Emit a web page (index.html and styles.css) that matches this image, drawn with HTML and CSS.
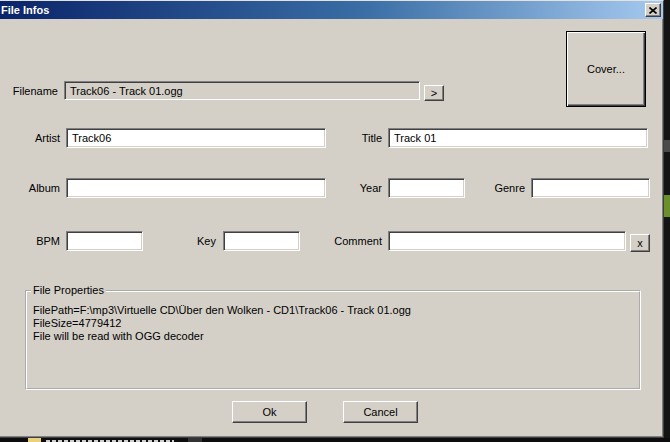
FILE: index.html
```html
<!DOCTYPE html>
<html lang="de">
<head>
<meta charset="utf-8">
<title>File Infos</title>
<link rel="stylesheet" href="styles.css">
</head>
<body>
<div class="screen">
  <div class="main">
    <div class="window">
      <div class="titlebar">
        <span class="title">File Infos</span>
        <button class="btn close" aria-label="Close">
          <svg width="8" height="7" viewBox="0 0 8 7"><path d="M0.5 0.5 L7.5 6.5 M7.5 0.5 L0.5 6.5" stroke="#000" stroke-width="1.6" fill="none"/></svg>
        </button>
      </div>
      <div class="content">
        <div class="top">
          <div class="row filename-row">
            <label class="lbl w-filename">Filename</label>
            <div class="field disabled w-filefield">Track06 - Track 01.ogg</div>
            <button class="btn small">&gt;</button>
          </div>
          <button class="btn default cover">Cover...</button>
        </div>

        <div class="row row2">
          <label class="lbl w60">Artist</label>
          <input class="field w260" type="text" value="Track06">
          <label class="lbl w56">Title</label>
          <input class="field w260" type="text" value="Track 01">
        </div>

        <div class="row row3">
          <label class="lbl w60">Album</label>
          <input class="field w260" type="text" value="">
          <label class="lbl w56">Year</label>
          <input class="field w77" type="text" value="">
          <label class="lbl w60">Genre</label>
          <input class="field w119" type="text" value="">
        </div>

        <div class="row row4">
          <label class="lbl w60">BPM</label>
          <input class="field w77" type="text" value="">
          <label class="lbl w73 key">Key</label>
          <input class="field w77" type="text" value="">
          <label class="lbl w82">Comment</label>
          <input class="field w238" type="text" value="">
          <button class="btn clear">x</button>
        </div>

        <fieldset class="group">
          <legend>File Properties</legend>
          <div class="props">
            <div>FilePath=F:\mp3\Virtuelle CD\Über den Wolken - CD1\Track06 - Track 01.ogg</div>
            <div>FileSize=4779412</div>
            <div>File will be read with OGG decoder</div>
          </div>
        </fieldset>

        <div class="actions">
          <button class="btn action">Ok</button>
          <button class="btn action">Cancel</button>
        </div>
      </div>
    </div>
    <div class="side">
      <div class="side-gray"></div>
      <div class="side-green"></div>
    </div>
  </div>
  <div class="bottom">
    <span class="folder"></span>
    <span class="bottom-tops"></span>
    <span class="bottom-block"></span>
  </div>
</div>
</body>
</html>
```

FILE: styles.css
```css
* { box-sizing: border-box; }

html, body {
  margin: 0;
  padding: 0;
}

body {
  width: 670px;
  height: 442px;
  overflow: hidden;
  background: #0d0d0d;
  font-family: "Liberation Sans", Arial, sans-serif;
  font-size: 11px;
  color: #000;
}

.screen {
  display: flex;
  flex-direction: column;
  width: 670px;
  height: 442px;
}

.main {
  display: flex;
  height: 438px;
}

.window {
  width: 664px;
  height: 438px;
  background: #d4d0c8;
  border-top: 1px solid #e4e2dc;
  border-right: 1px solid #404040;
  border-bottom: 1px solid #404040;
  box-shadow: inset -1px -1px #808080;
  display: flex;
  flex-direction: column;
}

.titlebar {
  height: 18px;
  display: flex;
  align-items: center;
  justify-content: space-between;
  padding: 0 2px 0 1px;
  background: linear-gradient(to right, #0a246a 0%, #3a6ea5 55%, #a6caf0 100%);
}

.title {
  color: #fff;
  font-weight: bold;
  font-size: 11px;
}

.btn {
  background: #d4d0c8;
  border: 1px solid;
  border-color: #fff #404040 #404040 #fff;
  box-shadow: inset -1px -1px #808080;
  font: inherit;
  color: #000;
  padding: 0;
  margin: 0;
  display: flex;
  align-items: center;
  justify-content: center;
}

.close {
  width: 16px;
  height: 14px;
}

.content {
  padding-top: 12px;
  display: flex;
  flex-direction: column;
}

.top {
  display: flex;
  align-items: flex-start;
  height: 76px;
}

.row {
  display: flex;
  align-items: center;
  height: 20px;
}

.filename-row {
  margin-top: 50px;
  height: 19px;
}

.cover {
  margin-left: auto;
  margin-right: 17px;
  width: 80px;
  height: 76px;
}

.btn.default {
  border: 1px solid #000;
  box-shadow: inset 1px 1px #fff, inset -1px -1px #404040, inset -2px -2px #808080;
}

.lbl {
  text-align: right;
  margin-right: 6px;
  flex: none;
}

.w-filename { width: 58px; }
.w60 { width: 60px; }
.w56 { width: 56px; }
.w73 { width: 73px; }
.w82 { width: 82px; }
.key { margin-right: 7px; }

.field {
  height: 20px;
  background: #fff;
  border: 1px solid;
  border-color: #808080 #fff #fff #808080;
  box-shadow: inset 1px 1px #404040, inset -1px -1px #d4d0c8;
  padding: 0 5px;
  font: inherit;
  color: #000;
  outline: none;
  margin: 0;
  flex: none;
}

.field.disabled {
  background: #d4d0c8;
  height: 19px;
  display: flex;
  align-items: center;
}

.w-filefield { width: 356px; }
.w260 { width: 260px; }
.w77 { width: 77px; }
.w119 { width: 119px; }
.w238 { width: 238px; }

.small {
  width: 20px;
  height: 16px;
  margin-left: 4px;
  align-self: flex-end;
  margin-bottom: -1px;
}

.clear {
  width: 20px;
  height: 18px;
  margin-left: 4px;
  align-self: flex-start;
  margin-top: 3px;
}

.row2 { margin-top: 21px; }
.row3 { margin-top: 30px; }
.row4 { margin-top: 33px; }

.group {
  margin: 33px 0 0 25px;
  width: 616px;
  height: 106px;
  border: 2px groove #fff;
  padding: 6px 6px 0 6px;
  min-width: 0;
}

.group legend {
  padding: 0 2px;
  margin-left: -2px;
  line-height: 13px;
}

.props {
  line-height: 13px;
  margin-top: 1px;
}

.actions {
  display: flex;
  gap: 36px;
  margin: 11px 0 0 232px;
}

.action {
  width: 75px;
  height: 22px;
}

.side {
  width: 6px;
  height: 438px;
  background: #141414;
  display: flex;
  flex-direction: column;
}

.side-gray {
  height: 12px;
  margin-top: 140px;
  background: #4a4a4a;
}

.side-green {
  height: 22px;
  margin-top: 43px;
  background: #6b8f2a;
}

.bottom {
  height: 4px;
  overflow: hidden;
  display: flex;
  align-items: flex-start;
  background: #0d0d0d;
}

.folder {
  width: 13px;
  height: 4px;
  margin-left: 28px;
  background: #e8d27a;
  flex: none;
}

.bottom-tops {
  width: 128px;
  height: 2px;
  margin: 2px 0 0 5px;
  background: repeating-linear-gradient(to right, #cfcfcf 0 4px, transparent 4px 6px);
  flex: none;
}

.bottom-block {
  width: 14px;
  height: 4px;
  margin-left: 14px;
  background: #333;
  flex: none;
}
```
